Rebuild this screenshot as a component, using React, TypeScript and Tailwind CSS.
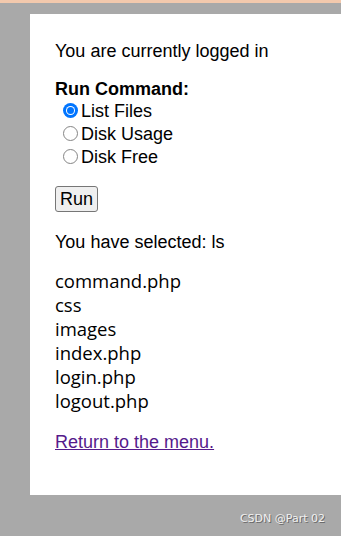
const files = ['command.php', 'css', 'images', 'index.php', 'login.php', 'logout.php'];

const options = [
  { value: 'ls', label: 'List Files', checked: true },
  { value: 'du', label: 'Disk Usage', checked: false },
  { value: 'df', label: 'Disk Free', checked: false },
];

function Radio({ checked }: { checked: boolean }) {
  return checked ? (
    <span className="w-[15px] h-[15px] rounded-full bg-[#0075ff] flex items-center justify-center mr-[3px] shrink-0">
      <span className="w-[9px] h-[9px] rounded-full bg-white flex items-center justify-center">
        <span className="w-[7px] h-[7px] rounded-full bg-[#0075ff]" />
      </span>
    </span>
  ) : (
    <span className="w-[15px] h-[15px] rounded-full border border-[#858585] bg-white mr-[3px] shrink-0" />
  );
}

export default function App() {
  return (
    <div className="w-[341px] h-[536px] bg-[#a9a9a9] overflow-hidden flex flex-col font-['Liberation_Sans',Arial,sans-serif] text-[18px] text-black">
      <div className="h-[3px] bg-[#f3c9ad] shrink-0" />
      <div className="ml-[30px] mt-[11px] h-[481px] bg-white pl-[25px] pt-[27px] shrink-0">
        <p className="leading-[20px]">You are currently logged in</p>

        <p className="leading-[20px] mt-[18px] font-bold">Run Command:</p>
        <div className="pl-[8px]">
          {options.map(o => (
            <label key={o.value} className="flex items-center h-[23px] leading-[20px]">
              <Radio checked={o.checked} />
              {o.label}
            </label>
          ))}
        </div>

        <button className="mt-[18px] h-[26px] w-[43px] border border-[#767676] rounded-[3px] bg-[#efefef] leading-[20px]">
          Run
        </button>

        <p className="leading-[20px] mt-[19px]">You have selected: ls</p>

        <div className="mt-[17px] font-['Open_Sans',sans-serif] text-[18.5px] leading-[24px]">
          {files.map(f => (
            <div key={f}>{f}</div>
          ))}
        </div>

        <a href="#" className="block mt-[19px] leading-[20px] text-[#551a8b] underline w-max">
          Return to the menu.
        </a>
      </div>
      <div className="flex justify-end pr-[16px] pt-[16px]">
        <span className="text-[11px] text-[#f0f0f0] [text-shadow:1px_1px_0_#6a6a6a] font-['DejaVu_Sans',sans-serif]">
          CSDN @Part 02
        </span>
      </div>
    </div>
  );
}
